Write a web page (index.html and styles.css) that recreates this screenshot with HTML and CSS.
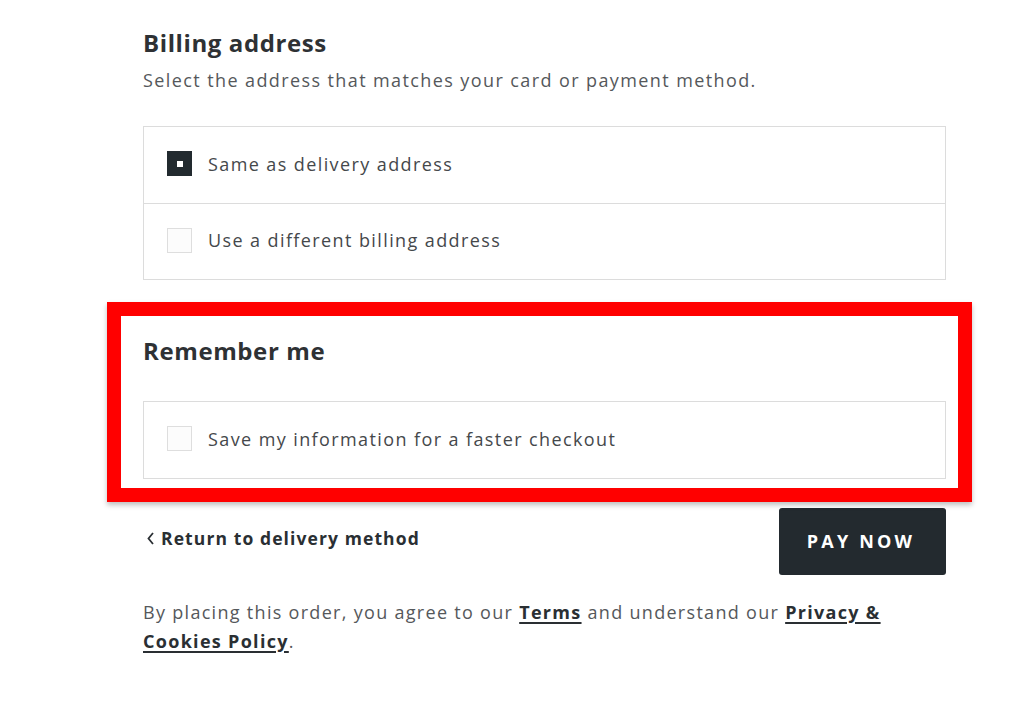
FILE: index.html
```html
<!DOCTYPE html>
<html lang="en">
<head>
<meta charset="utf-8">
<title>Checkout</title>
<link rel="stylesheet" href="styles.css">
</head>
<body>
<main class="checkout">
  <section class="section billing">
    <h2 class="section-title">Billing address</h2>
    <p class="section-sub">Select the address that matches your card or payment method.</p>
    <div class="option-list">
      <label class="option">
        <span class="check check--on"><span class="check-dot"></span></span>
        <span class="option-text">Same as delivery address</span>
      </label>
      <label class="option">
        <span class="check"></span>
        <span class="option-text">Use a different billing address</span>
      </label>
    </div>
  </section>

  <section class="section remember">
    <div class="highlight"></div>
    <h2 class="section-title">Remember me</h2>
    <div class="option-list">
      <label class="option">
        <span class="check"></span>
        <span class="option-text">Save my information for a faster checkout</span>
      </label>
    </div>
  </section>

  <div class="actions">
    <a class="back-link" href="#"><svg class="chev" width="9" height="14" viewBox="0 0 9 14"><path d="M7 2 L2.5 7.5 L7 13" fill="none" stroke="#2a2f33" stroke-width="1.8"/></svg>Return to delivery method</a>
    <button class="pay-btn" type="button">PAY NOW</button>
  </div>

  <p class="legal">By placing this order, you agree to our <a href="#">Terms</a> and understand our <a href="#">Privacy &amp; Cookies Policy</a>.</p>
</main>
</body>
</html>
```

FILE: styles.css
```css
* { box-sizing: border-box; }
html, body { margin: 0; padding: 0; background: #fff; }
body {
  font-family: "Open Sans", "Liberation Sans", sans-serif;
  color: #3c3f42;
}
.checkout {
  width: 803px;
  margin-left: 143px;
  padding-top: 28px;
}
.section { position: relative; }
.section-title {
  margin: 0;
  font-size: 24px;
  font-weight: 700;
  letter-spacing: 0.6px;
  color: #2e3134;
  line-height: 30px;
}
.section-sub {
  margin: 10px 0 0;
  font-size: 18px;
  letter-spacing: 1.4px;
  color: #55585b;
  line-height: 24px;
}
.option-list {
  margin-top: 34px;
  border: 1px solid #dcdcdc;
}
.option {
  display: flex;
  align-items: center;
  height: 76px;
  padding-left: 23px;
  padding-bottom: 3px;
  gap: 16px;
}
.option + .option { border-top: 1px solid #dcdcdc; }
.check {
  width: 25px;
  height: 25px;
  border: 1px solid #dedede;
  background: #fcfcfc;
  display: flex;
  align-items: center;
  justify-content: center;
  flex: none;
}
.check--on { background: #222a2f; border-color: #222a2f; }
.check-dot { width: 6px; height: 6px; background: #fff; }
.option-text {
  font-size: 18px;
  letter-spacing: 1.4px;
  color: #45484b;
}
.remember { margin-top: 56px; }
.remember .option-list { margin-top: 35px; }
.highlight {
  position: absolute;
  left: -36px;
  top: -34px;
  width: 865px;
  height: 200px;
  border: 14px solid #ff0000;
  box-shadow: 0 3px 5px rgba(0,0,0,0.25);
  pointer-events: none;
}
.actions {
  margin-top: 29px;
  display: flex;
  justify-content: space-between;
  align-items: center;
}
.back-link {
  display: flex;
  align-items: center;
  gap: 6px;
  padding-left: 3px;
  font-size: 17.5px;
  font-weight: 700;
  letter-spacing: 1.1px;
  color: #2a2f33;
  text-decoration: none;
  margin-top: -8px;
}
.pay-btn {
  width: 167px;
  height: 67px;
  border: 0;
  border-radius: 3px;
  background: #232a2f;
  color: #fff;
  font-family: inherit;
  font-size: 18px;
  font-weight: 700;
  letter-spacing: 3.2px;
  padding-left: 3px;
  padding-bottom: 2px;
}
.legal {
  margin: 23px 0 0;
  font-size: 18px;
  letter-spacing: 1.3px;
  line-height: 29px;
  color: #55585b;
}
.legal a {
  color: #2a2f33;
  font-weight: 700;
  text-decoration: underline;
  text-decoration-thickness: 2px;
  text-underline-offset: 3px;
}
```
